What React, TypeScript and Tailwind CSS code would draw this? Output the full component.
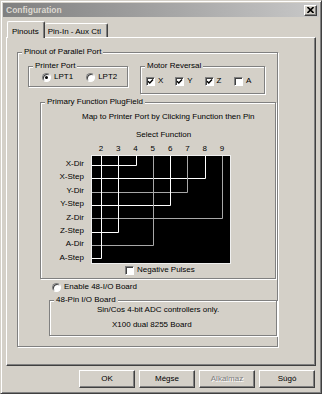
import type { ReactNode } from 'react'

const cols = [9, 26, 44, 61, 78, 95, 113, 130]
const rows = [9, 22, 36, 49, 62, 76, 89, 102]

// row index -> column index, line colour
const links: [number, number, string][] = [
  [0, 2, '#ffffff'],
  [1, 6, '#ffffff'],
  [2, 5, '#a8a8a8'],
  [3, 4, '#ffffff'],
  [4, 7, '#a8a8a8'],
  [5, 1, '#ffffff'],
  [6, 3, '#a8a8a8'],
  [7, 0, '#ffffff'],
]

const functions = ['X-Dir', 'X-Step', 'Y-Dir', 'Y-Step', 'Z-Dir', 'Z-Step', 'A-Dir', 'A-Step']
const pins = ['2', '3', '4', '5', '6', '7', '8', '9']

const Group = ({ title, className, children }: { title: string; className: string; children?: ReactNode }) => (
  <div className={`border border-[#808080] shadow-[inset_1px_1px_0_#fff,1px_1px_0_#fff] ${className}`}>
    <div className="-mt-[6px] flex h-[10px] leading-[10px]">
      <span className="ml-[4px] bg-[#d4d0c8] px-[2px]">{title}</span>
    </div>
    {children}
  </div>
)

const Radio = ({ checked }: { checked?: boolean }) => (
  <span className="flex h-[9px] w-[9px] shrink-0 items-center justify-center rounded-full border border-t-[#808080] border-l-[#808080] border-r-white border-b-white bg-white shadow-[inset_1px_1px_0_#404040]">
    {checked && <span className="h-[3px] w-[3px] rounded-full bg-black" />}
  </span>
)

const Check = ({ checked }: { checked?: boolean }) => (
  <span className="flex h-[9px] w-[9px] shrink-0 items-center justify-center border border-t-[#808080] border-l-[#808080] border-r-white border-b-white bg-white shadow-[inset_1px_1px_0_#404040]">
    {checked && (
      <svg width="7" height="7" viewBox="0 0 7 7">
        <path d="M1 3.2 L2.8 5 L6 1.6" fill="none" stroke="#000" strokeWidth="1.4" />
      </svg>
    )}
  </span>
)

const Button = ({ label, disabled }: { label: string; disabled?: boolean }) => (
  <div className="flex h-[18px] w-[56px] items-center justify-center border border-t-white border-l-white border-r-[#404040] border-b-[#404040] shadow-[inset_-1px_-1px_0_#808080]">
    <span className={disabled ? 'text-[#808080] [text-shadow:1px_1px_0_#fff]' : ''}>{label}</span>
  </div>
)

export default function App() {
  return (
    <div className="h-[394px] w-[322px] border border-t-[#d4d0c8] border-l-[#d4d0c8] border-r-[#404040] border-b-[#404040] bg-[#d4d0c8] p-[2px] font-['Liberation_Sans',Arial,sans-serif] text-[8px] text-black shadow-[inset_1px_1px_0_#fff,inset_-1px_-1px_0_#808080]">
      {/* title bar */}
      <div className="flex h-[14px] items-center justify-between bg-gradient-to-r from-[#808080] to-[#c8c8c8] pl-[3px] pr-[2px]">
        <span className="text-[8.5px] font-bold text-[#dcd8d0]">Configuration</span>
        <div className="flex h-[11px] w-[13px] items-center justify-center border border-t-white border-l-white border-r-[#404040] border-b-[#404040] bg-[#d4d0c8] shadow-[inset_-1px_-1px_0_#808080]">
          <svg width="7" height="6" viewBox="0 0 7 6">
            <path d="M0.5 0 L6.5 6 M6.5 0 L0.5 6" stroke="#000" strokeWidth="1.6" />
          </svg>
        </div>
      </div>

      {/* tabs */}
      <div className="flex h-[20px] items-end pl-[4px]">
        <div className="relative z-10 -mb-[1px] flex h-[17px] items-start rounded-t-[2px] border-t border-l border-r border-t-white border-l-white border-r-[#404040] bg-[#d4d0c8] pt-[4px] pl-[4px] pr-[5px] shadow-[inset_-1px_0_0_#808080]">
          Pinouts
        </div>
        <div className="flex h-[14px] items-start rounded-t-[2px] border-t border-r border-t-white border-r-[#404040] pt-[2px] pl-[3px] pr-[6px] shadow-[inset_-1px_0_0_#808080]">
          Pin-In - Aux Ctl
        </div>
      </div>

      {/* tab panel */}
      <div className="ml-[3px] h-[329px] w-[310px] border border-t-white border-l-white border-r-[#404040] border-b-[#404040] shadow-[inset_-1px_-1px_0_#808080]">
        <Group title="Pinout of Parallel Port" className="mt-[14px] ml-[10px] h-[295px] w-[261px]">
          <div className="mt-[9px] ml-[10px] flex items-start">
            <Group title="Printer Port" className="h-[21px] w-[100px]">
              <div className="mt-[1px] flex h-[10px] items-center">
                <div className="ml-[13px] flex items-center gap-[3px]">
                  <Radio checked />
                  <span>LPT1</span>
                </div>
                <div className="ml-[13px] flex items-center gap-[3px]">
                  <Radio />
                  <span>LPT2</span>
                </div>
              </div>
            </Group>
            <Group title="Motor Reversal" className="ml-[12px] h-[28px] w-[125px]">
              <div className="mt-[5px] ml-[5px] flex h-[10px] items-center">
                {[
                  ['X', true],
                  ['Y', true],
                  ['Z', true],
                  ['A', false],
                ].map(([axis, on]) => (
                  <div key={axis as string} className="flex w-[29.3px] items-center gap-[3px]">
                    <Check checked={on as boolean} />
                    <span>{axis as string}</span>
                  </div>
                ))}
              </div>
            </Group>
          </div>

          <Group title="Primary Function PlugField" className="mt-[8px] ml-[22px] h-[177px] w-[236px]">
            <div className="mt-[5px] ml-[41px] h-[10px] leading-[10px]">Map to Printer Port by Clicking Function then Pin</div>
            <div className="mt-[8px] ml-[95px] h-[10px] leading-[10px]">Select Function</div>
            <div className="mt-[4px] ml-[51.3px] flex h-[10px] leading-[10px]">
              {pins.map((p) => (
                <span key={p} className="w-[17.3px] text-center">
                  {p}
                </span>
              ))}
            </div>
            <div className="mt-[1px] flex">
              <div className="w-[43px] pt-[2px] text-right">
                {functions.map((f) => (
                  <div key={f} className="h-[13.4px] leading-[13.4px]">
                    {f}
                  </div>
                ))}
              </div>
              <div className="ml-[7px] h-[109px] w-[140px] border border-[#f0f0f0] bg-black">
                <svg width="138" height="107" viewBox="0 0 138 107" className="block">
                  {links.map(([r, c, color]) => (
                    <path
                      key={r}
                      d={`M0 ${rows[r] + 0.5} H${cols[c] + 0.5} V0`}
                      fill="none"
                      stroke={color}
                      strokeWidth="1"
                    />
                  ))}
                </svg>
              </div>
            </div>
            <div className="mt-[1px] ml-[84px] flex h-[10px] items-center gap-[3px]">
              <Check />
              <span>Negative Pulses</span>
            </div>
          </Group>

          <div className="mt-[3px] ml-[34px] flex h-[10px] items-center gap-[3px]">
            <Radio />
            <span>Enable 48-I/O Board</span>
          </div>

          <Group title="48-Pin I/O Board" className="mt-[8px] ml-[31px] h-[36px] w-[228px]">
            <div className="ml-[47px] h-[10px] leading-[10px]">Sin/Cos 4-bit ADC controllers only.</div>
            <div className="mt-[5px] ml-[62px] h-[10px] leading-[10px]">X100 dual 8255 Board</div>
          </Group>
        </Group>
      </div>

      {/* buttons */}
      <div className="mt-[4px] flex w-[312px] justify-end gap-[4px]">
        <Button label="OK" />
        <Button label="Mégse" />
        <Button label="Alkalmaz" disabled />
        <Button label="Súgó" />
      </div>
    </div>
  )
}
